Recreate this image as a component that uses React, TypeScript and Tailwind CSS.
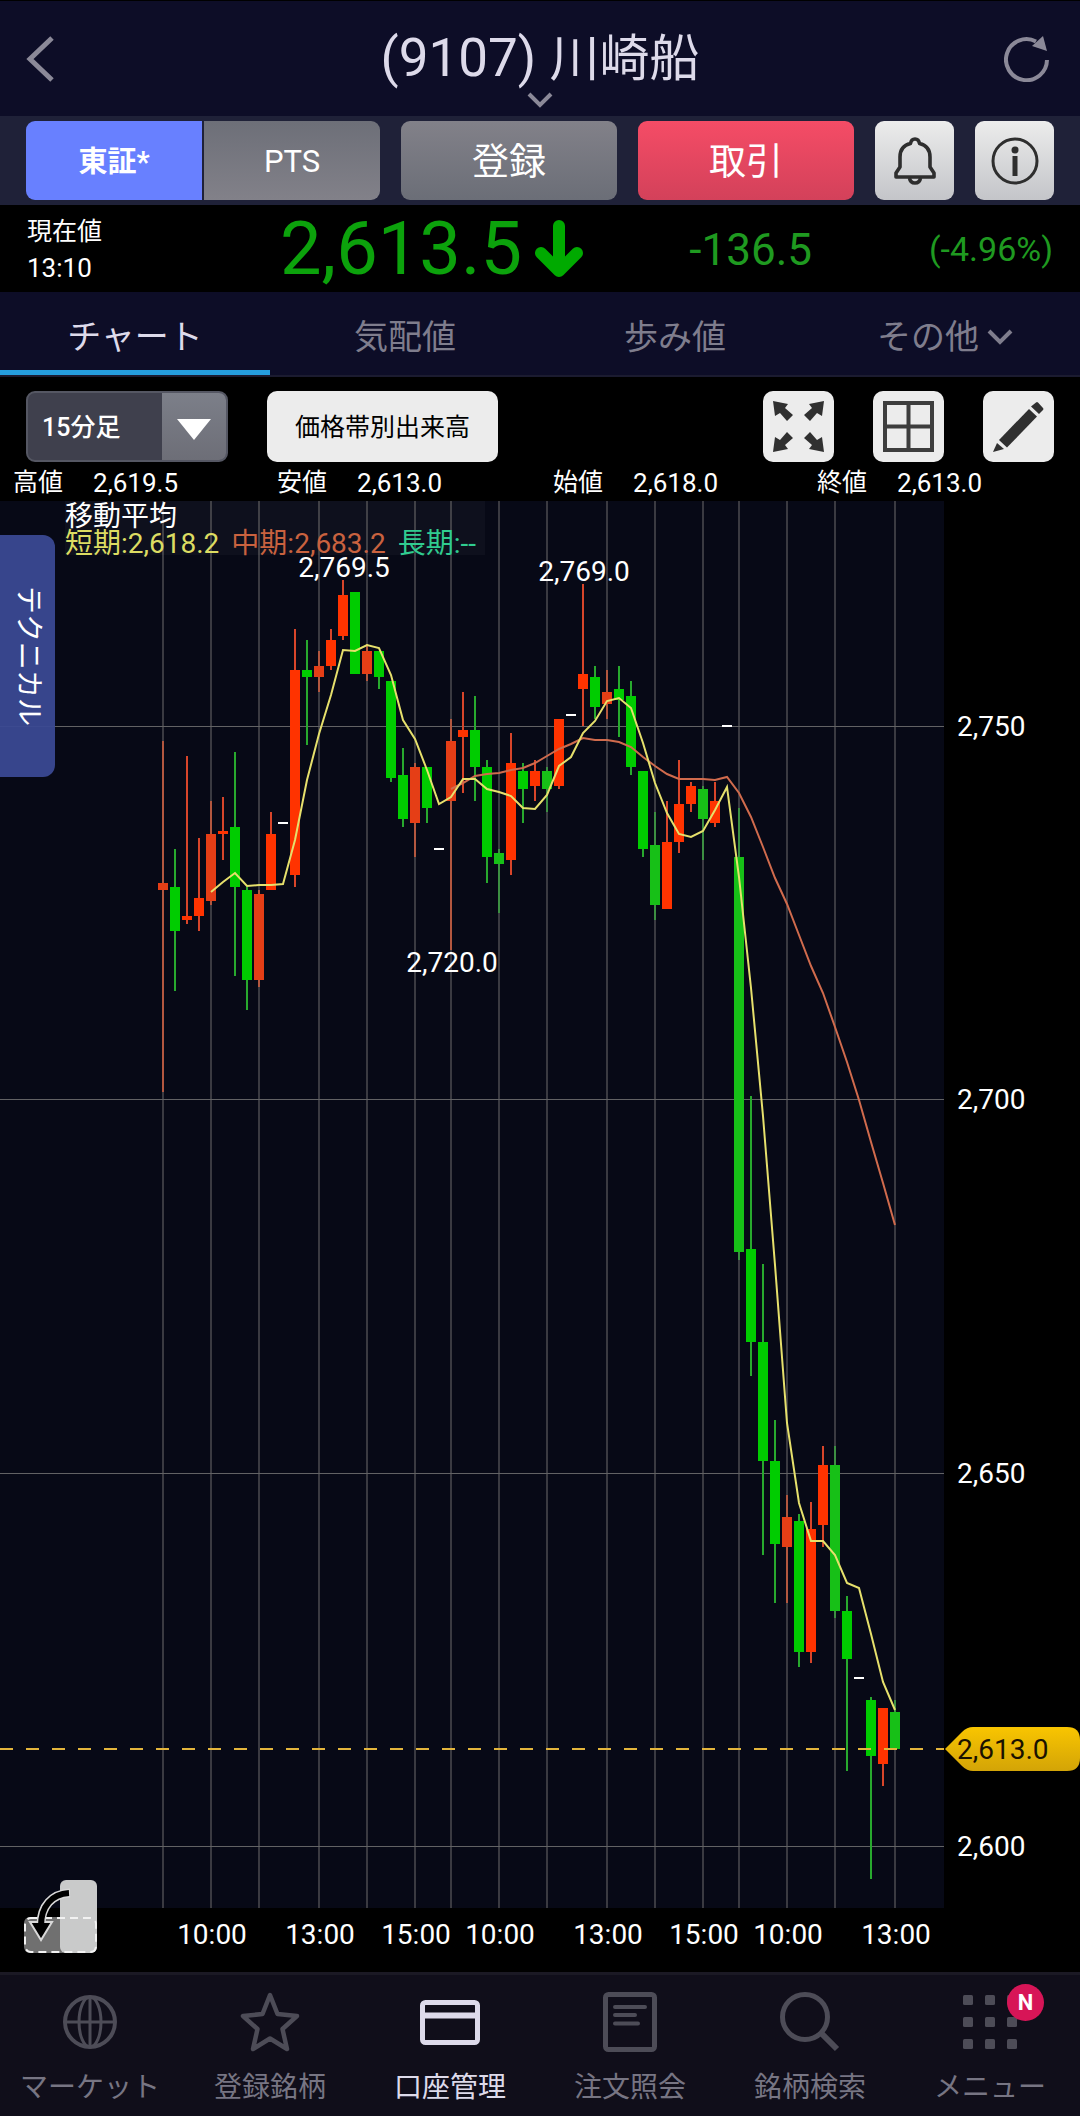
import React, { useState } from 'react';

type Candle = [open: number, high: number, low: number, close: number];

const CANDLES: Candle[] = [
  [2728, 2748, 2701, 2729],
  [2728.5, 2733.5, 2714.5, 2722.5],
  [2724, 2746, 2723.5, 2724.5],
  [2724.5, 2735, 2722.5, 2727],
  [2726.5, 2740, 2726, 2735.5],
  [2735.5, 2740.5, 2732, 2736],
  [2736.5, 2746.5, 2716.5, 2728.5],
  [2728, 2728.5, 2712, 2716],
  [2716, 2728, 2715, 2727.5],
  [2728, 2738.5, 2728, 2735.5],
  [2737, 2737, 2737, 2737],
  [2730, 2763, 2728.5, 2757.5],
  [2757.5, 2761.5, 2747.5, 2756.5],
  [2756.5, 2760, 2754.5, 2758],
  [2758, 2763, 2757.5, 2761.5],
  [2762, 2769.5, 2761.5, 2767.5],
  [2768, 2768, 2757, 2757],
  [2757, 2761, 2756, 2760],
  [2760, 2760, 2755, 2756.5],
  [2756, 2756, 2742.5, 2743],
  [2743.5, 2747, 2736.5, 2737.5],
  [2737, 2745, 2732.5, 2744.5],
  [2744.5, 2744.5, 2737, 2739],
  [2733.5, 2733.5, 2733.5, 2733.5],
  [2740, 2751, 2720, 2748],
  [2748.5, 2754.5, 2741, 2749.5],
  [2749.5, 2754, 2740, 2744.5],
  [2744.5, 2745.5, 2729, 2732.5],
  [2733, 2733.5, 2725, 2731.5],
  [2732, 2749, 2730, 2745],
  [2744, 2745, 2737, 2741.5],
  [2742, 2745.5, 2740, 2744],
  [2744, 2744.5, 2738.5, 2741.5],
  [2742, 2751, 2741.5, 2751],
  [2751.5, 2751.5, 2751.5, 2751.5],
  [2755, 2769, 2750, 2757],
  [2756.5, 2758, 2751, 2752.5],
  [2753, 2757.5, 2751, 2754.5],
  [2755, 2758, 2748.5, 2753.5],
  [2754, 2756, 2743.5, 2744.5],
  [2744, 2744, 2732.5, 2733.5],
  [2734, 2738.5, 2724, 2726],
  [2725.5, 2740, 2725.5, 2734.5],
  [2734.5, 2745.5, 2733, 2739.5],
  [2739.5, 2742.5, 2738.5, 2742],
  [2741.5, 2742, 2732, 2737.5],
  [2737, 2742.5, 2736.5, 2740],
  [2750, 2750, 2750, 2750],
  [2732.5, 2739, 2678.5, 2679.5],
  [2680, 2700.5, 2663, 2667.5],
  [2667.5, 2678, 2639, 2651.5],
  [2651.5, 2657, 2632.5, 2640.5],
  [2640, 2647, 2632.5, 2644],
  [2643.5, 2644.5, 2624, 2626],
  [2626, 2646, 2624.5, 2642.5],
  [2643, 2653.5, 2640, 2651],
  [2651, 2653.5, 2630.5, 2631.5],
  [2631.5, 2633.5, 2610, 2625],
  [2622.5, 2622.5, 2622.5, 2622.5],
  [2619.5, 2620, 2595.5, 2612],
  [2611, 2618.5, 2608, 2618.5],
  [2618, 2619.5, 2613, 2613],
];

const GRID = [0, 4, 8, 13, 17, 21, 24, 28, 32, 37, 41, 45, 48, 52, 56, 61];
const PRICES = [2750, 2700, 2650, 2600];
const TIMES: [number, string][] = [
  [4, '10:00'],
  [13, '13:00'],
  [21, '15:00'],
  [28, '10:00'],
  [37, '13:00'],
  [45, '15:00'],
  [52, '10:00'],
  [61, '13:00'],
];
const LAST = 2613;

const PLOT_W = 944;
const PLOT_H = 1407;
const xOf = (i: number) => 163 + i * 12;
const yOf = (price: number) => Math.round(225 + (2750 - price) * 7.466);
const fmt = (price: number, digits = 0) =>
  price.toLocaleString('en-US', { minimumFractionDigits: digits, maximumFractionDigits: digits });

// simple moving average of the closes, as polyline points
const average = (span: number) =>
  CANDLES.map((_, i) => {
    if (i < span - 1) return '';
    const sum = CANDLES.slice(i - span + 1, i + 1).reduce((acc, c) => acc + c[3], 0);
    return `${xOf(i)},${yOf(sum / span)}`;
  })
    .filter(Boolean)
    .join(' ');

const CandleShape = ({ candle, index }: { candle: Candle; index: number }) => {
  const [open, high, low, close] = candle;
  const x = xOf(index);
  if (high === low) {
    return <rect x={x - 5} y={yOf(close) - 1} width={10} height={2} fill="#fff" />;
  }
  const up = close > open;
  const onGrid = GRID.includes(index);
  const body = up ? (onGrid ? '#e53e16' : '#ff3300') : onGrid ? '#17c017' : '#00cc00';
  const wick = up ? (onGrid ? '#b3573f' : '#d8452a') : onGrid ? '#3c8f42' : '#28a92e';
  const top = yOf(Math.max(open, close));
  const bottom = yOf(Math.min(open, close));
  return (
    <g>
      <rect x={x - 1} y={yOf(high)} width={2} height={yOf(low) - yOf(high)} fill={wick} />
      <rect x={x - 5} y={top} width={10} height={bottom - top} fill={body} />
    </g>
  );
};

const Chart = () => (
  <svg viewBox="0 0 1080 1471" className="block w-full text-[28px]" role="img" aria-label="15分足チャート">
    <defs>
      <linearGradient id="tag" x1="0" y1="0" x2="0" y2="1">
        <stop offset="0" stopColor="#f9c500" />
        <stop offset="1" stopColor="#d3a407" />
      </linearGradient>
    </defs>
    <rect width={PLOT_W} height={PLOT_H} fill="#070916" />
    {GRID.map((i) => (
      <rect key={i} x={xOf(i) - 1} y={0} width={2} height={PLOT_H} fill="#3a3a41" />
    ))}
    {PRICES.map((p) => (
      <rect key={p} x={0} y={yOf(p)} width={PLOT_W} height={1} fill="#626264" />
    ))}
    {CANDLES.map((c, i) => (
      <CandleShape key={i} candle={c} index={i} />
    ))}
    <polyline points={average(25)} fill="none" stroke="#d06b4d" strokeWidth={2} />
    <polyline points={average(5)} fill="none" stroke="#e6e06c" strokeWidth={2} />
    <line x1={0} x2={PLOT_W} y1={yOf(LAST)} y2={yOf(LAST)} stroke="#e3b53c" strokeWidth={2} strokeDasharray="13 13" />

    <g fill="#fff" textAnchor="middle">
      <text x={xOf(15) + 1} y={yOf(2769.5) - 3}>2,769.5</text>
      <text x={xOf(35) + 1} y={yOf(2769) - 3}>2,769.0</text>
      <text x={xOf(24) + 1} y={yOf(2720) + 22}>2,720.0</text>
      {TIMES.map(([i, label]) => (
        <text key={i} x={xOf(i) + 1} y={1443}>{label}</text>
      ))}
    </g>
    {PRICES.map((p) => (
      <text key={p} x={957} y={yOf(p) + 10} fill="#fff">{fmt(p)}</text>
    ))}

    <g transform={`translate(945 ${yOf(LAST)})`}>
      <path d="M0 0L17-17Q22-22 28-22H122Q135-22 135-9V9Q135 22 122 22H28Q22 22 17 17Z" fill="url(#tag)" />
      <text x={12} y={10} fill="#1a1200">{fmt(LAST, 1)}</text>
    </g>
  </svg>
);

const Chevron = ({ className }: { className?: string }) => (
  <svg viewBox="0 0 26 17" className={className} fill="none" stroke="currentColor" aria-hidden="true">
    <path d="M2 2L13 13L24 2" strokeWidth="4" />
  </svg>
);

const Header = () => (
  <header className="grid h-29 grid-cols-[1fr_auto_1fr] items-center border-t border-black bg-[#0d0d27] px-[26px] text-[#8b8998]">
    <button type="button" aria-label="戻る">
      <svg viewBox="0 0 28 46" className="h-[46px] w-7" fill="none" stroke="currentColor" strokeWidth="5">
        <path d="M26 2L4 23L26 44" />
      </svg>
    </button>
    <button type="button" className="flex flex-col items-center pt-4">
      <h1 className="text-[53px] leading-[66px] text-[#dddaea]">
        (9107) <span className="text-[50px]">川崎船</span>
      </h1>
      <Chevron className="h-[17px] w-[26px]" />
    </button>
    <button type="button" aria-label="更新" className="justify-self-end">
      <svg viewBox="0 0 50 46" className="h-[46px] w-[50px]">
        <path d="M43 24A20.500 20.500 0 1 1 32 5.500" fill="none" stroke="currentColor" strokeWidth="4" />
        <path d="M39 0L43 15L28 10Z" fill="currentColor" />
      </svg>
    </button>
  </header>
);

const BellIcon = () => (
  <svg viewBox="0 0 42 48" className="h-12 w-[42px]" fill="none" stroke="#2e2e2e" strokeWidth="3.600" strokeLinejoin="round">
    <path d="M2 40V36L6 30V20C6 12 10 8 16.500 6.500C17 3.500 18.500 2 21 2S25 3.500 25.500 6.500C32 8 36 12 36 20V30L40 36V40Z" />
    <path d="M15.500 41C16 44.500 18 46 21 46S26 44.500 26.500 41" />
  </svg>
);

const InfoIcon = () => (
  <svg viewBox="0 0 48 48" className="size-12" fill="#2e2e2e">
    <circle cx="24" cy="24" r="22" fill="none" stroke="#2e2e2e" strokeWidth="3" />
    <circle cx="24" cy="13" r="3.500" />
    <rect x="21.500" y="19" width="5" height="20" />
  </svg>
);

const Actions = () => {
  const light = 'flex items-center justify-center rounded-[9px] bg-linear-to-b from-[#ececec] to-[#c4c5c9]';
  return (
    <div className="grid h-[89px] grid-cols-[354fr_216fr_216fr_79px_79px] gap-[21px] bg-[#1f2138] px-[26px] py-[5px] text-white">
      <div className="grid grid-cols-2 gap-0.5">
        <button type="button" className="rounded-l-[9px] bg-[#6880ff] pt-1 text-[29px] font-bold">東証*</button>
        <button type="button" className="rounded-r-[9px] bg-linear-to-b from-[#6d6f78] to-[#828189] pt-1 text-[31px]">PTS</button>
      </div>
      <button type="button" className="rounded-[9px] bg-linear-to-b from-[#828189] to-[#6b6e77] pt-1 text-[37px]">登録</button>
      <button type="button" className="rounded-[9px] bg-linear-to-b from-[#f54c66] to-[#d3415a] pt-1 text-[37px]">取引</button>
      <button type="button" aria-label="アラート" className={light}><BellIcon /></button>
      <button type="button" aria-label="情報" className={light}><InfoIcon /></button>
    </div>
  );
};

const Quote = () => (
  <section className="grid h-[87px] grid-cols-[280fr_304fr_228fr_268fr] items-center bg-black text-[#1f9a20]">
    <div className="pt-0.5 pl-[27px] text-white">
      <p className="text-[25px] leading-9">現在値</p>
      <p className="text-[26px] leading-9">13:10</p>
    </div>
    <div className="flex items-center justify-between text-[74px] leading-none text-[#0ca20c]">
      2,613.5
      <svg viewBox="0 0 50 58" className="h-[58px] w-[50px]" fill="none" stroke="#00aa00" strokeWidth="12" strokeLinecap="round" strokeLinejoin="round">
        <path d="M25 6V51M7 33L25 51L43 33" />
      </svg>
    </div>
    <p className="pt-0.5 text-right text-[44px] leading-none">-136.5</p>
    <p className="pr-[27px] text-right text-[34px] leading-none">(-4.96%)</p>
  </section>
);

const TABS = ['チャート', '気配値', '歩み値', 'その他'];

const Tabs = () => {
  const [active, setActive] = useState('チャート');
  return (
    <nav className="grid h-[85px] grid-cols-4 border-b-2 border-[#1b1b30] bg-[#0d0d27] text-[34px]">
      {TABS.map((tab) => (
        <button
          key={tab}
          type="button"
          onClick={() => setActive(tab)}
          className={`flex items-center justify-center gap-2 border-b-[5px] pt-3 ${
            tab === active ? 'border-[#259ddd] text-[#dddaea]' : 'border-transparent text-[#7f7d8d]'
          }`}
        >
          {tab}
          {tab === 'その他' && <Chevron className="h-[17px] w-[26px]" />}
        </button>
      ))}
    </nav>
  );
};

const ARROW = 'M0 0L15 3L12 7L20 14L14 20L7 12L2 15Z';

const ExpandIcon = () => (
  <svg viewBox="0 0 51 51" className="size-[51px]" fill="#303030">
    <path d={ARROW} />
    <path d={ARROW} transform="translate(51 0) scale(-1 1)" />
    <path d={ARROW} transform="translate(0 51) scale(1 -1)" />
    <path d={ARROW} transform="translate(51 51) scale(-1 -1)" />
  </svg>
);

const PanesIcon = () => (
  <svg viewBox="0 0 51 51" className="size-[51px]" fill="none" stroke="#3d3d3d" strokeWidth="4">
    <path d="M2 2H49V49H2ZM25.500 2V49M2 25.500H49" />
  </svg>
);

const PencilIcon = () => (
  <svg viewBox="0 0 51 51" className="size-[51px]" fill="#303030">
    <path d="M43 1.500Q44 .5 45 1.500L50 7Q51 8 50 9L46 13L38 5.500Z" />
    <path d="M36 8L44 15.500L14 46.500L6 39Z" />
    <path d="M4 42L11 48L0 51Z" />
  </svg>
);

const Toolbar = () => {
  const light = 'flex h-[71px] items-center justify-center rounded-[10px] bg-[#ececec]';
  return (
    <div className="flex gap-[39px] px-[26px] pt-3.5">
      <div className="relative h-[71px] w-[202px] overflow-hidden rounded-[9px] border-2 border-[#555763] bg-[#3f404d]">
        <select aria-label="足種" className="size-full appearance-none pt-0.5 pl-3.5 text-[25px] font-medium text-white outline-none">
          <option>15分足</option>
          <option>30分足</option>
          <option>60分足</option>
        </select>
        <span className="pointer-events-none absolute inset-y-0 right-0 flex w-16 items-center justify-center bg-linear-to-b from-[#7c7f89] to-[#6d6e77]">
          <svg viewBox="0 0 34 21" className="mt-1.5 h-[21px] w-[34px]" fill="#fff">
            <path d="M0 0H34L17 21Z" />
          </svg>
        </span>
      </div>
      <button type="button" className={`${light} w-[231px] pt-0.5 text-[25px] text-black`}>価格帯別出来高</button>
      <div className="ml-auto flex gap-[39px]">
        <button type="button" aria-label="拡大" className={`${light} w-[71px]`}><ExpandIcon /></button>
        <button type="button" aria-label="分割" className={`${light} w-[71px]`}><PanesIcon /></button>
        <button type="button" aria-label="描画" className={`${light} w-[71px]`}><PencilIcon /></button>
      </div>
    </div>
  );
};

const OHLC = [
  ['高値', '2,619.5'],
  ['安値', '2,613.0'],
  ['始値', '2,618.0'],
  ['終値', '2,613.0'],
];

const OhlcRow = () => (
  <dl className="grid h-[39px] grid-cols-[264fr_276fr_264fr_276fr] items-center pt-0.5 text-[26px] leading-none text-white">
    {OHLC.map(([label, value]) => (
      <div key={label} className="flex items-center gap-[30px] pl-[13px]">
        <dt className="text-[25px]">{label}</dt>
        <dd>{value}</dd>
      </div>
    ))}
  </dl>
);

const RotateIcon = () => (
  <svg viewBox="0 0 73 73" className="size-[73px]">
    <rect x="0" y="37" width="45" height="36" rx="6" fill="#707070" />
    <rect x="36" y="0" width="37" height="73" rx="6" fill="#c9caca" />
    <rect x="1" y="38" width="71" height="34" rx="6" fill="none" stroke="#f2f2f2" strokeWidth="2" strokeDasharray="8 5" />
    <path d="M46 13C28 14 17 26 17 45" fill="none" stroke="#d9d9d9" strokeWidth="9" />
    <path d="M6 42H28L17 60Z" fill="#000" stroke="#d9d9d9" strokeWidth="2" />
    <path d="M45 13C28 14 17 26 17 46" fill="none" stroke="#000" strokeWidth="6" />
  </svg>
);

const ChartPanel = () => (
  <div className="relative">
    <Chart />
    <div className="absolute top-0 left-[65px] h-[54px] w-[420px] bg-white/3 pt-0.5 text-[28px] leading-[27px] whitespace-nowrap">
      <p className="text-white">移動平均</p>
      <p className="flex gap-3">
        <span className="text-[#dcdc62]">短期:2,618.2</span>
        <span className="text-[#c9623f]">中期:2,683.2</span>
        <span className="text-[#30cc90]">長期:--</span>
      </p>
    </div>
    <button
      type="button"
      className="absolute top-[34px] left-0 flex h-[242px] w-[55px] items-center justify-center rounded-r-xl bg-[#3a4992]/95 text-[28px] text-white [text-orientation:sideways] [writing-mode:vertical-rl]"
    >
      テクニカル
    </button>
    <button type="button" aria-label="画面回転" className="absolute bottom-[19px] left-6">
      <RotateIcon />
    </button>
  </div>
);

const NAV: { label: string; icon: React.ReactNode }[] = [
  {
    label: 'マーケット',
    icon: (
      <g fill="none" stroke="currentColor">
        <circle cx="30" cy="30" r="25" strokeWidth="4" />
        <path d="M30 5V55M5 30H55" strokeWidth="3" />
        <ellipse cx="30" cy="30" rx="11" ry="25" strokeWidth="3" />
      </g>
    ),
  },
  {
    label: '登録銘柄',
    icon: (
      <path
        d="M30 3L37.500 22L57 24L42.500 37L47 57L30 46.500L13 57L17.500 37L3 24L22.500 22Z"
        fill="none"
        stroke="currentColor"
        strokeWidth="4.500"
        strokeLinejoin="round"
      />
    ),
  },
  {
    label: '口座管理',
    icon: (
      <g fill="none" stroke="currentColor">
        <rect x="2.500" y="10.500" width="55" height="40" rx="3" strokeWidth="5" />
        <path d="M3 23.500H57" strokeWidth="6" />
      </g>
    ),
  },
  {
    label: '注文照会',
    icon: (
      <g fill="none" stroke="currentColor" strokeLinecap="round">
        <rect x="5.500" y="2.500" width="49" height="55" rx="3" strokeWidth="5" />
        <path d="M15 15H45M15 23H35M15 31.500H38" strokeWidth="4" />
      </g>
    ),
  },
  {
    label: '銘柄検索',
    icon: (
      <g fill="none" stroke="currentColor" strokeWidth="5">
        <circle cx="25" cy="25" r="22.500" />
        <path d="M41 41L57 57" strokeWidth="6" />
      </g>
    ),
  },
  {
    label: 'メニュー',
    icon: (
      <g fill="currentColor">
        {[3, 25, 47].map((y) =>
          [3, 25, 47].map((x) => <rect key={`${x}-${y}`} x={x} y={y} width="10" height="10" rx="1.500" />)
        )}
      </g>
    ),
  },
];

const BottomNav = () => (
  <nav className="grid h-36 grid-cols-6 border-t-3 border-[#1b1924] bg-[#100e1a]">
    {NAV.map(({ label, icon }) => {
      const active = label === '口座管理';
      return (
        <a
          key={label}
          href="#"
          className={`flex flex-col items-center pt-[17px] text-[28px] leading-9 ${active ? 'text-[#dddaea]' : 'text-[#777583]'}`}
        >
          <span className={`relative mb-[18px] ${active ? 'text-[#dddaea]' : 'text-[#4d4c57]'}`}>
            <svg viewBox="0 0 60 60" className="size-[60px]" aria-hidden="true">{icon}</svg>
            {label === 'メニュー' && (
              <span className="absolute -top-2 -right-6 flex size-[37px] items-center justify-center rounded-full bg-[#d71557] text-[22px] font-bold text-white">
                N
              </span>
            )}
          </span>
          {label}
        </a>
      );
    })}
  </nav>
);

export default function App() {
  return (
    <div className="min-h-screen bg-black font-['Roboto','Noto_Sans_CJK_JP',sans-serif]">
      <Header />
      <Actions />
      <Quote />
      <Tabs />
      <Toolbar />
      <OhlcRow />
      <ChartPanel />
      <BottomNav />
    </div>
  );
}
